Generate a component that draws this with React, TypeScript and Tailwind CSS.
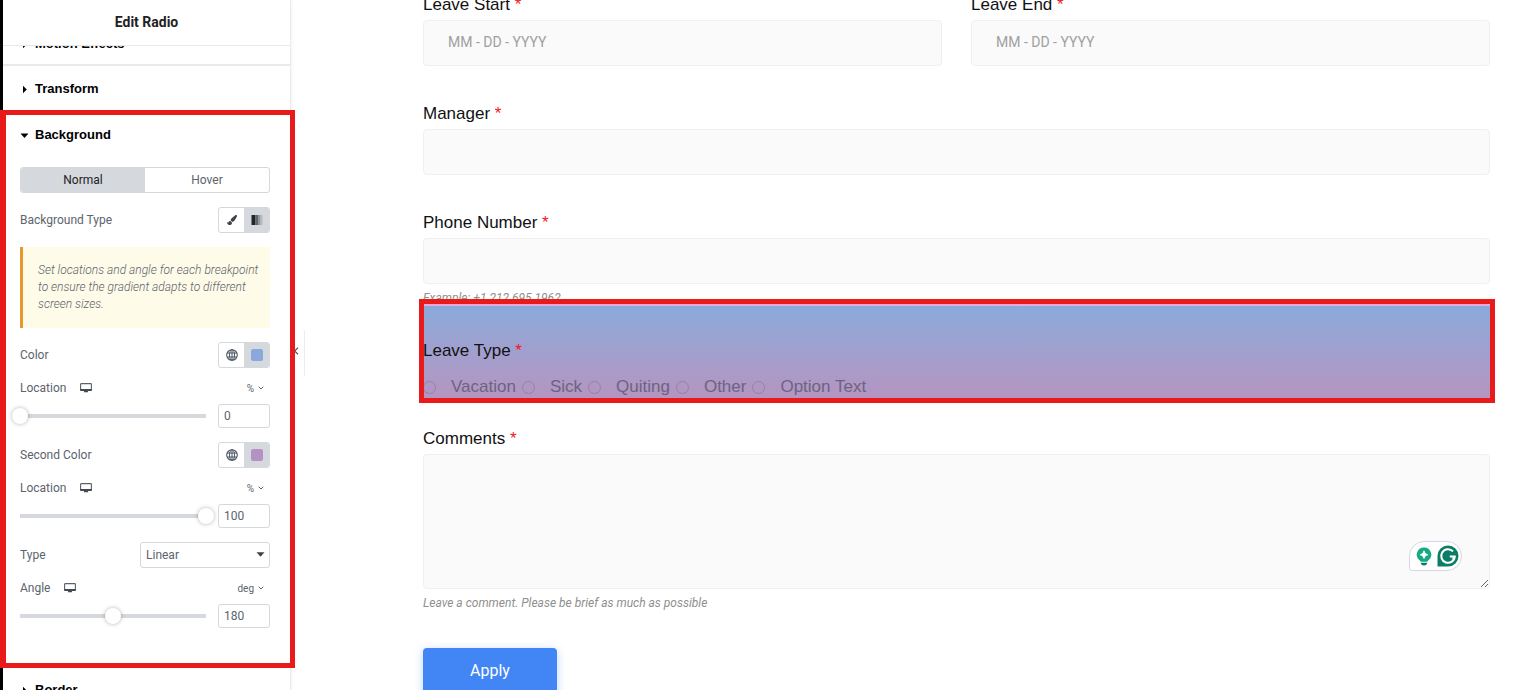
import React from 'react';
import { FaPaintBrush } from 'react-icons/fa';

function GlobeIcon() {
  return (
    <svg className="size-3" viewBox="0 0 12 12" fill="none" stroke="#4b5563">
      <circle cx="6" cy="6" r="5.3" strokeWidth="1.1" />
      <ellipse cx="6" cy="6" rx="2.5" ry="5.3" />
      <path d="M6 .6v10.8M1.2 4h9.6M1.2 8h9.6" />
    </svg>
  );
}

function DesktopIcon() {
  return (
    <svg className="h-[10px] w-3" viewBox="0 0 12 10">
      <path
        d="M1.2.6h9.6a.6.6 0 0 1 .6.6v5.6H.6V1.2a.6.6 0 0 1 .6-.6Z"
        fill="#fff"
        stroke="#5b626b"
        strokeWidth="1.1"
      />
      <path d="M.1 5.9h11.8v1.4a.7.7 0 0 1-.7.7H.8a.7.7 0 0 1-.7-.7Z" fill="#434a54" />
      <path d="M4.2 8h3.6l.5 1.2H3.7Z" fill="#434a54" />
    </svg>
  );
}

function GradientIcon() {
  return (
    <svg className="h-[10px] w-3" viewBox="0 0 12 10">
      <rect x="0.5" width="4" height="10" fill="#222529" />
      <rect x="4.5" width="3" height="10" fill="#5f646b" />
      <rect x="7.5" width="2" height="10" fill="#8f949b" />
      <rect x="9.5" width="2" height="10" fill="#b5b9bf" />
    </svg>
  );
}

function AssistantBadge() {
  return (
    <div className="absolute right-7 bottom-[18px] flex h-[30px] w-[53px] items-center justify-end gap-[5px] rounded-[15px] rounded-bl-[3px] border border-[#d3d8e8] bg-white pr-[2px]">
      <svg className="h-[19px] w-4" viewBox="0 0 16 19">
        <path
          d="M8 .5a7.2 7.2 0 0 0-4.3 13c.6.4.9.7 1 1.2h6.6c.1-.5.4-.8 1-1.2A7.2 7.2 0 0 0 8 .5Z"
          fill="#12ab83"
        />
        <path
          d="M8 3.8 9.2 6.5 11.9 7.7 9.2 8.9 8 11.6 6.8 8.9 4.1 7.7 6.8 6.5Z"
          fill="#fff"
          stroke="#fff"
          strokeWidth="0.8"
        />
        <path d="M4.7 15.8h6.6c-.2 1.6-1.2 2.7-3.3 2.7s-3.1-1.1-3.3-2.7Z" fill="#0b7d67" />
      </svg>
      <svg className="size-[22px]" viewBox="0 0 22 22">
        <path d="M11 .5A10.5 10.5 0 1 1 11 21.5H.5V11A10.5 10.5 0 0 1 11 .5Z" fill="#0b7d67" />
        <path
          d="M16 6.4A6.8 6.8 0 1 0 17.8 11.4h-5M17.8 11.4l-2.2 3.4"
          fill="none"
          stroke="#fff"
          strokeWidth="2"
        />
      </svg>
    </div>
  );
}

function Chevron() {
  return (
    <svg className="h-1 w-[6px]" viewBox="0 0 6 4" fill="none" stroke="#5b626b">
      <path d="M.7.7 3 3 5.3.7" />
    </svg>
  );
}

type SectionTitleProps = {
  title: string;
  open?: boolean;
};

function SectionTitle({ title, open }: SectionTitleProps) {
  return (
    <button className="flex h-[46px] w-full shrink-0 items-center gap-[6px] pl-[17px] font-['Liberation_Sans',Arial,sans-serif] text-[13px] font-bold text-black">
      <svg className="size-[9px]" viewBox="0 0 9 9">
        <path d={open ? 'M.5 2.5h8L4.5 7Z' : 'M3 .8v7.4L6.8 4.5Z'} />
      </svg>
      {title}
    </button>
  );
}

type ColorControlProps = {
  label: string;
  swatch: string;
};

function ColorControl({ label, swatch }: ColorControlProps) {
  return (
    <div className="flex h-[26px] items-center justify-between">
      <span>{label}</span>
      <div className="flex h-full w-[52px] overflow-hidden rounded-[3px] border border-[#d5d8dc]">
        <button
          aria-label={`${label}: global`}
          className="flex flex-1 items-center justify-center"
        >
          <GlobeIcon />
        </button>
        <button
          aria-label={`${label}: pick`}
          className="flex w-[25px] items-center justify-center bg-[#d5d8dc]"
        >
          <span className={`size-3 rounded-xs ${swatch}`} />
        </button>
      </div>
    </div>
  );
}

type SliderControlProps = {
  id: string;
  label: string;
  unit: string;
  max: number;
  initial: number;
};

function SliderControl({ id, label, unit, max, initial }: SliderControlProps) {
  const [value, setValue] = React.useState(initial);

  return (
    <div>
      <div className="mb-[10px] flex h-3 items-center justify-between">
        <div className="flex items-center gap-[14px]">
          <label htmlFor={id}>{label}</label>
          <DesktopIcon />
        </div>
        <button className="flex items-center gap-1 pr-[6px] text-[10px]">
          {unit}
          <Chevron />
        </button>
      </div>
      <div className="flex items-center gap-1">
        <input
          type="range"
          aria-label={label}
          max={max}
          value={value}
          onChange={(e) => setValue(Number(e.target.value))}
          className="-ml-2 h-4 min-w-0 flex-1 appearance-none bg-[linear-gradient(#d5d8dc,#d5d8dc)] bg-[length:calc(100%-16px)_4px] bg-center bg-no-repeat [&::-webkit-slider-thumb]:size-4 [&::-webkit-slider-thumb]:appearance-none [&::-webkit-slider-thumb]:rounded-full [&::-webkit-slider-thumb]:bg-white [&::-webkit-slider-thumb]:shadow-[0_0_4px_rgba(0,0,0,0.3)]"
        />
        <input
          id={id}
          type="text"
          value={value}
          onChange={(e) => setValue(Number(e.target.value) || 0)}
          className="h-6 w-[52px] rounded-[3px] border border-[#d5d8dc] px-[5px]"
        />
      </div>
    </div>
  );
}

function Sidebar() {
  return (
    <aside className="relative z-10 flex w-[291px] shrink-0 flex-col border-r border-l-3 border-r-[#ececee] border-l-black bg-white font-[Roboto,sans-serif] text-[12px] text-[#5c646d] shadow-[1px_0_3px_rgba(0,0,0,0.05)]">
      <h1 className="flex h-[46px] shrink-0 items-center justify-center border-b border-[#e6e8ea] text-[14px] font-bold text-[#1f2124]">
        Edit Radio
      </h1>
      <div className="flex h-5 shrink-0 flex-col justify-end overflow-hidden border-b-2 border-[#e9eaec]">
        <div className="-mb-[3px]">
          <SectionTitle title="Motion Effects" />
        </div>
      </div>
      <SectionTitle title="Transform" />

      <section className="relative shrink-0 pb-[39px]">
        <SectionTitle title="Background" open />
        <div className="flex flex-col gap-[14px] pt-[9px] pr-5 pl-[17px]">
          <div className="flex h-[26px] overflow-hidden rounded-[3px] border border-[#d5d8dc]">
            <button className="flex-1 bg-[#d5d8dc] text-[#1f2124]">Normal</button>
            <button className="flex-1">Hover</button>
          </div>

          <div className="flex h-[26px] items-center justify-between">
            <span>Background Type</span>
            <div className="flex h-full w-[52px] overflow-hidden rounded-[3px] border border-[#d5d8dc]">
              <button aria-label="Classic" className="flex flex-1 items-center justify-center">
                <FaPaintBrush className="size-[10px] text-[#3f444b]" />
              </button>
              <button
                aria-label="Gradient"
                className="flex w-[25px] items-center justify-center bg-[#d5d8dc]"
              >
                <GradientIcon />
              </button>
            </div>
          </div>

          <p className="border-l-3 border-[#e8962e] bg-[#fffbe9] py-[15px] pl-[15px] leading-[17px] font-light italic">
            Set locations and angle for each breakpoint
            <br />
            to ensure the gradient adapts to different
            <br />
            screen sizes.
          </p>

          <ColorControl label="Color" swatch="bg-[#8aa8dc]" />
          <SliderControl id="location" label="Location" unit="%" max={100} initial={0} />
          <ColorControl label="Second Color" swatch="bg-[#b592c4]" />
          <SliderControl id="second-location" label="Location" unit="%" max={100} initial={100} />

          <div className="flex h-[26px] items-center justify-between">
            <label htmlFor="type">Type</label>
            <div className="relative h-full w-[130px]">
              <select
                id="type"
                className="h-full w-full appearance-none rounded-[3px] border border-[#d5d8dc] px-[5px]"
              >
                <option>Linear</option>
                <option>Radial</option>
              </select>
              <svg
                className="pointer-events-none absolute top-[10px] right-[5px] h-[5px] w-[9px]"
                viewBox="0 0 9 5"
              >
                <path d="M.5.3h8L4.5 4.7Z" fill="#3f444b" />
              </svg>
            </div>
          </div>

          <SliderControl id="angle" label="Angle" unit="deg" max={360} initial={180} />
        </div>
        <div className="pointer-events-none absolute -top-[2px] -right-[5px] -bottom-px -left-[3px] z-10 border-5 border-l-6 border-[#e81a1a]" />
      </section>

      <SectionTitle title="Border" />

      <button
        aria-label="Hide panel"
        className="absolute top-[329px] left-full flex h-12 w-[15px] items-center justify-start rounded-r-[3px] border-r border-[#ececee] bg-white pl-[3px] pb-1"
      >
        <svg className="h-2 w-[6px]" viewBox="0 0 6 8" fill="none" stroke="#515962">
          <path d="M5 .8 1.6 4 5 7.2" strokeWidth="1.2" />
        </svg>
      </button>
    </aside>
  );
}

function Star() {
  return <span className="text-[#f01818]"> *</span>;
}

type FieldProps = {
  id: string;
  label: string;
  placeholder?: string;
};

function Field({ id, label, placeholder }: FieldProps) {
  return (
    <div className="flex-1">
      <label htmlFor={id} className="block text-[17px] leading-5 text-[#111]">
        {label}
        <Star />
      </label>
      <input
        id={id}
        type="text"
        placeholder={placeholder}
        className="mt-[5px] block h-[46px] w-full rounded-[4px] border border-[#f0f0f0] bg-[#fafafa] px-6 pb-[2px] font-[Roboto,sans-serif] text-[14px] placeholder:text-[#a0a0a0]"
      />
    </div>
  );
}

const leaveTypes = ['Vacation', 'Sick', 'Quiting', 'Other', 'Option Text'];

function LeaveForm() {
  return (
    <form
      className="-mt-[5px] min-w-0 flex-1 pr-[46px] pl-[132px] font-['Liberation_Sans',Arial,sans-serif]"
      onSubmit={(e) => e.preventDefault()}
    >
      <div className="flex flex-col gap-[38px]">
        <div className="flex gap-[29px]">
          <Field id="leave-start" label="Leave Start" placeholder="MM - DD - YYYY" />
          <Field id="leave-end" label="Leave End" placeholder="MM - DD - YYYY" />
        </div>
        <Field id="manager" label="Manager" />
        <Field id="phone" label="Phone Number" />
      </div>
      <p className="mt-2 font-[Roboto,sans-serif] text-[12px] leading-3 text-[#8f8f8f] italic">
        Example: +1 212 695 1962
      </p>

      <fieldset className="relative border-t-2 border-[#eba8dc] bg-linear-to-b from-[#8aaadb] to-[#b594c0] pt-[35px] pb-[2px]">
        <legend className="float-left text-[17px] leading-5 text-[#111]">
          Leave Type
          <Star />
        </legend>
        <div className="clear-left flex gap-[6px] pt-4 text-[17px] leading-5 text-[#6b6480]">
          {leaveTypes.map((type) => (
            <label key={type} className="flex items-center gap-[15px]">
              <input
                type="radio"
                name="leave-type"
                className="size-[13px] appearance-none rounded-full border border-[#8f86a3] checked:bg-[#6b6480]"
              />
              {type}
            </label>
          ))}
        </div>
        <div className="pointer-events-none absolute -top-[7px] -right-[5px] -bottom-1 -left-1 border-5 border-[#e81a1a]" />
      </fieldset>

      <label htmlFor="comments" className="mt-[30px] block text-[17px] leading-5 text-[#111]">
        Comments
        <Star />
      </label>
      <div className="relative mt-[5px]">
        <textarea
          id="comments"
          className="block h-[135px] w-full resize-y rounded-[4px] border border-[#f0f0f0] bg-[#fafafa] p-6"
        />
        <AssistantBadge />
      </div>
      <p className="mt-2 font-[Roboto,sans-serif] text-[12px] leading-3 text-[#8f8f8f] italic">
        Leave a comment. Please be brief as much as possible
      </p>

      <button className="mt-[39px] block h-[46px] w-[134px] rounded-[4px] bg-[#4285f5] font-[Roboto,sans-serif] text-[16px] text-white shadow-[0_2px_10px_rgba(66,133,245,0.35)]">
        Apply
      </button>
    </form>
  );
}

export default function App() {
  return (
    <div className="flex h-screen overflow-hidden bg-white">
      <Sidebar />
      <LeaveForm />
    </div>
  );
}
